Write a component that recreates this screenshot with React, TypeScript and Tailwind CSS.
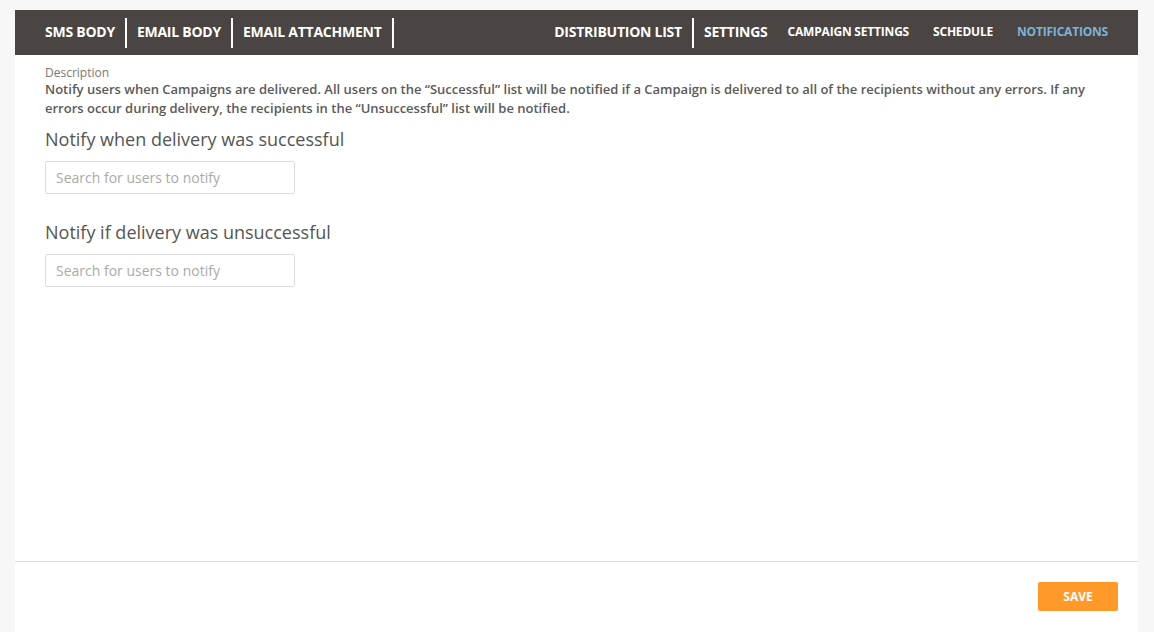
export default function App() {
  const font = { fontFamily: '"Open Sans", "Noto Sans", sans-serif' };
  return (
    <div className="h-[632px] w-full bg-[#f7f7f7] pt-[10px] pl-[15px] overflow-hidden" style={font}>
      <div className="w-[1123px] h-[622px] bg-white flex flex-col">
        <header className="h-[45px] bg-[#4a4542] flex items-center justify-between px-[30px] text-white">
          <nav className="flex items-center font-bold text-[14px] tracking-[-0.25px]">
            <span className="-mt-[2px]">SMS BODY</span>
            <span className="w-[2px] h-[30px] bg-white mx-[10px]" />
            <span className="-mt-[2px]">EMAIL BODY</span>
            <span className="w-[2px] h-[30px] bg-white mx-[10px]" />
            <span className="-mt-[2px]">EMAIL ATTACHMENT</span>
            <span className="w-[2px] h-[30px] bg-white ml-[10px]" />
          </nav>
          <nav className="flex items-center font-bold">
            <span className="text-[14px] tracking-[-0.25px] -mt-[2px]">DISTRIBUTION LIST</span>
            <span className="w-[2px] h-[30px] bg-white mx-[10px]" />
            <span className="text-[14px] tracking-[-0.25px] -mt-[2px]">SETTINGS</span>
            <span className="text-[12px] ml-[20px] tracking-[-0.2px] -mt-[2px]">CAMPAIGN SETTINGS</span>
            <span className="text-[12px] ml-[24px] tracking-[-0.2px] -mt-[2px]">SCHEDULE</span>
            <span className="text-[12px] ml-[24px] tracking-[-0.2px] -mt-[2px] text-[#7fb2d8]">NOTIFICATIONS</span>
          </nav>
        </header>
        <main className="flex-1 px-[30px] pt-[10px]">
          <div className="text-[12px] text-[#777] leading-[15px]">Description</div>
          <p className="text-[13px] font-semibold text-[#5a5a5a] leading-[19px] pr-[20px]">
            Notify users when Campaigns are delivered. All users on the “Successful” list will be notified if a Campaign is delivered to all of the recipients without any errors. If any errors occur during delivery, the recipients in the “Unsuccessful” list will be notified.
          </p>
          <h2 className="text-[18px] text-[#555] mt-[9px] leading-[24px]">Notify when delivery was successful</h2>
          <input
            className="mt-[10px] w-[250px] h-[33px] border border-[#dcdcdc] rounded-[2px] px-[10px] text-[14px] placeholder:text-[#aaa] outline-none"
            placeholder="Search for users to notify"
          />
          <h2 className="text-[18px] text-[#555] mt-[26px] leading-[24px]">Notify if delivery was unsuccessful</h2>
          <input
            className="mt-[10px] w-[250px] h-[33px] border border-[#dcdcdc] rounded-[2px] px-[10px] text-[14px] placeholder:text-[#aaa] outline-none"
            placeholder="Search for users to notify"
          />
        </main>
        <footer className="h-[71px] border-t border-[#dcdcdc] flex justify-end items-start pt-[20px] pr-[20px]">
          <button className="w-[80px] h-[29px] bg-[#ff9a2a] rounded-[2px] text-white text-[12px] font-bold">SAVE</button>
        </footer>
      </div>
    </div>
  );
}
